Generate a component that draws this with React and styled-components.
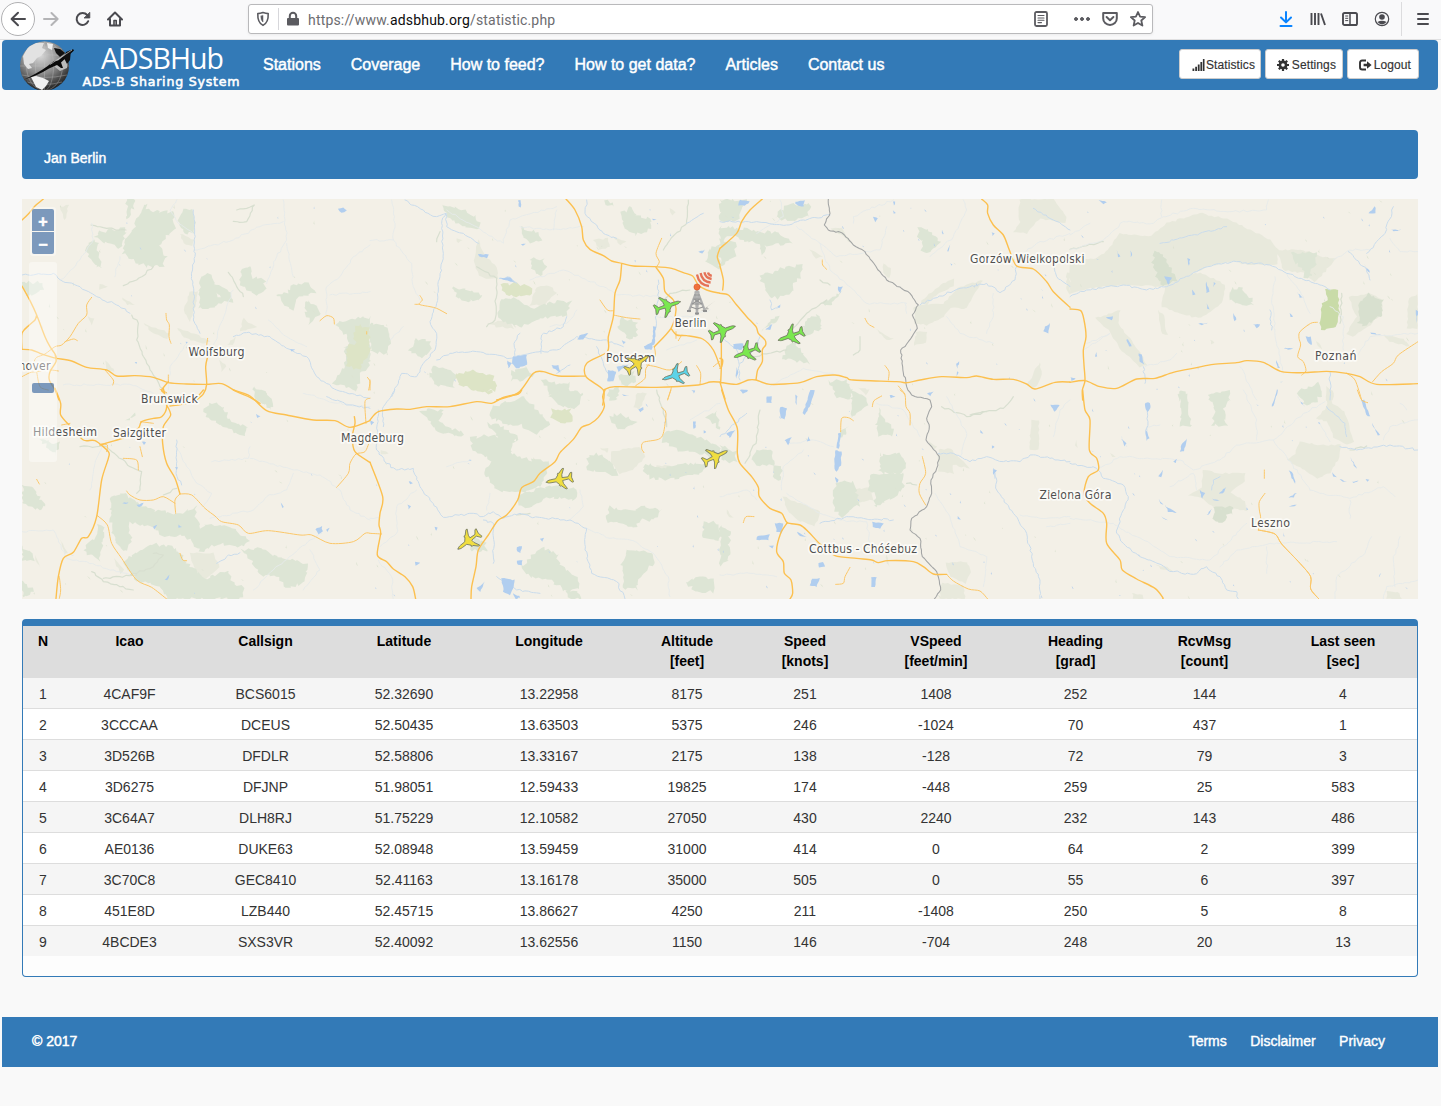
import React from "react";
import styled, { createGlobalStyle } from "styled-components";

/* ---------- shared values ---------- */
const blue = "#337ab7";
const sans = '"Liberation Sans", Arial, Helvetica, sans-serif';

const GlobalStyle = createGlobalStyle`
  *, *::before, *::after { box-sizing: border-box; }
  body { margin: 0; background: #f9f9f9; color: #333; font: 14px/20px ${sans}; }
`;

const Page = styled.div`
  width: 1441px;
  height: 1106px;
  display: flex;
  flex-direction: column;
  overflow: hidden;
`;

/* ---------- browser chrome ---------- */
const Toolbar = styled.div`
  height: 40px;
  flex: none;
  display: flex;
  align-items: center;
  border-bottom: 1px solid #e0e0e1;
  background: #f9f9fa;
  padding: 0 10px 2px 1px;
`;
const BackCircle = styled.div`
  width: 34px;
  height: 34px;
  display: grid;
  place-items: center;
  border: 1px solid #b1b1b3;
  border-radius: 50%;
  background: #fff;
`;
const ChromeIcon = styled.svg`
  display: block;
  width: 16px;
  height: 16px;
  flex: none;
  fill: none;
  stroke: ${(p) => p.$color || "#4a4a4f"};
  stroke-width: ${(p) => p.$w || 2};
  stroke-linecap: round;
  stroke-linejoin: round;
`;
const NavIcons = styled.div`
  display: flex;
  gap: 16px;
  margin-left: 8px;
`;
const UrlBar = styled.div`
  width: 905px;
  height: 30px;
  margin-left: 125px;
  display: flex;
  align-items: center;
  padding: 0 6px;
  border: 1px solid #b9b9bb;
  border-radius: 3px;
  background: #fff;
  box-shadow: 0 1px 3px rgba(0, 0, 0, 0.06);
`;
const UrlDivider = styled.span`
  width: 1px;
  height: 22px;
  margin: 0 6px 0 7px;
  background: #d7d7db;
`;
const Url = styled.span`
  margin-left: 7px;
  padding-top: 2px;
  flex: 1;
  font: 14px/20px Roboto, ${sans};
  letter-spacing: 0.18px;
  color: #6c6c70;
  b { font-weight: 400; color: #0c0c0d; }
`;
const UrlActions = styled.div`
  display: flex;
  align-items: center;
  gap: 12px;
`;
const Gap = styled.span`
  width: ${(p) => p.$w}px;
  flex: none;
`;
const RightIcons = styled.div`
  display: flex;
  gap: 16px;
  margin-left: auto;
  margin-right: 11px;
`;
const MenuCell = styled.div`
  height: 34px;
  padding-left: 13px;
  display: flex;
  align-items: center;
  border-left: 1px solid #dcdcde;
`;

/* ---------- site header ---------- */
const Header = styled.header`
  height: 50px;
  flex: none;
  margin: 0 3px 0 2px;
  display: flex;
  align-items: center;
  border-radius: 4px;
  background: ${blue};
  padding: 0 19px 0 15px;
`;
const Logo = styled.svg`
  width: 231px;
  height: 50px;
  flex: none;
`;
const Nav = styled.nav`
  display: flex;
`;
const NavLink = styled.a`
  padding: 0 15px;
  font-size: 16px;
  color: #fff;
  -webkit-text-stroke: 0.45px #fff;
`;
const ButtonGroup = styled.div`
  display: flex;
  gap: 4px;
  margin: 0 0 2px auto;
`;
const Button = styled.a`
  width: ${(p) => p.$w}px;
  height: 30px;
  display: flex;
  align-items: center;
  justify-content: flex-end;
  gap: ${(p) => p.$gap}px;
  padding-right: ${(p) => p.$pad || 6}px;
  border: 1px solid #ccc;
  border-radius: 3px;
  background: #fff;
  color: #333;
  font-size: 12px;
  letter-spacing: 0.1px;
  padding-top: 1px;
  -webkit-text-stroke: 0.15px #333;
`;
const ButtonIcon = styled.svg`
  width: 13px;
  height: 12px;
  flex: none;
`;

/* ---------- content ---------- */
const Content = styled.main`
  padding: 40px 23px 0 22px;
  display: flex;
  flex-direction: column;
  gap: 20px;
`;
const TitleBar = styled.h1`
  height: 49px;
  margin: 0;
  display: flex;
  align-items: center;
  padding: 7px 22px 0;
  border-radius: 4px;
  background: ${blue};
  color: #fff;
  font-size: 14px;
  font-weight: 400;
  -webkit-text-stroke: 0.4px #fff;
`;
const MapFrame = styled.section`
  position: relative;
  height: 400px;
  overflow: hidden;
  background: #f3f0e7;
`;
const MapSvg = styled.svg`
  display: block;
  width: 1396px;
  height: 400px;
`;
const ZoomControl = styled.div`
  position: absolute;
  left: 8px;
  top: 8px;
  display: grid;
  gap: 1px;
  padding: 2px;
  border-radius: 3px;
  background: rgba(255, 255, 255, 0.4);
`;
const ZoomButton = styled.span`
  width: 22px;
  height: 22px;
  display: grid;
  place-items: center;
  padding-top: 3px;
  border-radius: ${(p) => (p.$top ? "2px 2px 0 0" : "0 0 2px 2px")};
  background: rgba(0, 60, 136, 0.5);
  color: #fff;
  font: bold 16px/16px ${sans};
  -webkit-text-stroke: 0.5px #fff;
`;
const ZoomTrack = styled.div`
  position: absolute;
  left: 7px;
  top: 63px;
  width: 28px;
  height: 200px;
  padding: 121px 3px 0;
  border-radius: 3px;
  background: rgba(255, 255, 255, 0.4);
`;
const ZoomThumb = styled.div`
  height: 10px;
  border-radius: 2px;
  background: rgba(0, 60, 136, 0.5);
`;

/* ---------- table ---------- */
const Panel = styled.section`
  height: 358px;
  border: 1px solid ${blue};
  border-top-width: 7px;
  border-radius: 4px;
  background: #fdfdfd;
  overflow: hidden;
`;
const Table = styled.table`
  width: 1394px;
  table-layout: fixed;
  border-spacing: 0;
  text-align: center;
`;
const Th = styled.th`
  height: 52px;
  padding: 5px 0 0;
  vertical-align: top;
  background: #ddd;
  color: #000;
  white-space: pre-line;
`;
const Tr = styled.tr`
  height: ${(p) => (p.$first ? 30 : 31)}px;
  background: ${(p) => (p.$odd ? "#f5f5f5" : "#fff")};
`;
const Td = styled.td`
  padding: 6px 0 4px;
  border-top: ${(p) => (p.$first ? "0" : "1px solid #ddd")};
  color: #333;
`;

/* ---------- footer ---------- */
const Footer = styled.footer`
  height: 50px;
  flex: none;
  margin: 40px 3px 0 2px;
  display: flex;
  align-items: center;
  gap: 23.5px;
  padding: 0 53px 2px 30px;
  background: ${blue};
  color: #fff;
  -webkit-text-stroke: 0.4px #fff;
`;
const Copyright = styled.span`
  margin-right: auto;
  -webkit-text-stroke: 0.5px #fff;
`;

/* ---------- cartography ---------- */
// Each sheet covers a 350 x 215 area; its points are given in thirds of a pixel.
const sheets = [
  {
    at: [20, 190],
    roads: ["6,90 25,72 45,48 70,27", "6,288 30,332 50,375 75,440 90,470 105,492 110,505", "6,478 6,430 28,405 45,390 50,375", "6,478 35,480 60,490 90,500 110,505 155,513 200,532 260,540 290,558 345,557 400,562 445,578 500,582 560,583 605,581 650,605 690,622 720,640", "105,492 108,515 90,545 88,570 105,600 117,630", "563,500 557,530 560,583 550,612 530,630", "445,575 425,600 432,608"],
    minor: ["42,515 50,502 75,492 105,470 125,465 150,440 175,400 200,375 200,345 215,322", "135,455 160,447 172,452", "6,560 30,548 50,545 90,540 115,543", "50,545 60,590 85,600", "438,370 440,390 448,405 447,440 453,460", "563,445 560,470 565,500", "445,555 445,578", "420,598 440,608", "255,540 280,570 278,585", "900,392 920,377 940,384 943,402", "1040,425 1040,432", "1042,562 1050,575 1046,600"],
    forest: ["375,40 385,60 430,65 455,65 465,110 440,140 420,170 440,200 430,225 380,230 345,215 308,188 320,150 350,90", "240,125 320,115 300,172 260,160 225,140", "210,150 235,160 235,190 245,235 215,215 195,180", "320,27 350,27 335,60 320,90", "490,60 515,60 525,100 520,130 495,130 475,90", "545,255 570,248 600,325 580,280 635,305 635,335 600,338 560,360 535,350 540,290", "665,235 690,230 700,262 735,270 735,300 710,318 690,300 660,285", "770,310 805,310 820,282 870,280 885,305 830,325 820,358 790,345", "855,330 890,345 900,375 870,402 858,370", "945,398 1010,385 1050,382 1050,520 1020,560 1010,600 940,580 960,545 975,530 975,470 990,455", "700,595 750,620 755,650 710,630", "6,280 60,275 70,300 25,320"],
    olive: ["1000,405 1045,410 1050,480 1020,540 980,525 980,470 1005,465"],
    heath: ["510,305 535,305 525,350 510,395 490,360 500,340", "670,385 710,412 660,425", "480,130 520,150 515,170 490,160", "305,320 345,345 320,345", "120,50 145,45 135,90", "470,415 520,430 570,455 545,462 490,440", "370,400 450,430 440,445 400,430", "240,280 265,290 235,300", "205,380 222,385 215,405", "600,510 620,530 605,545", "255,510 285,545 260,540", "620,465 645,440 640,465"],
    faint: ["470,30 450,60 475,100 520,130", "215,100 220,150 160,235 120,270", "790,30 800,150 770,200 740,280", "920,380 920,290 960,260 1000,200 1050,165", "130,585 330,583 400,610", "500,460 450,530 445,600", "930,315 1050,305", "285,260 300,200", "580,470 620,350 640,300", "525,180 640,150 720,110 790,95", "800,160 820,260", "745,390 800,440 860,470"],
    river: ["520,60 525,200 515,260 522,330 520,390 540,430", "6,255 100,250 130,275 180,290 230,320 290,345 330,370", "640,440 680,428 750,440 800,475 860,500 890,560 950,600 1050,625"],
    green: ["335,375 355,400 350,450 380,520 420,590 440,610", "310,287 350,270 400,230", "625,247 650,290 670,320", "640,94 680,95 703,45 680,55 650,60", "213,105 260,115 318,120"],
    water: ["955,58 970,53 980,62 965,70", "810,478 825,480 815,484", "497,455 503,455 500,462", "345,515 352,516 350,522"],
  },
  {
    at: [20, 390],
    roads: ["105,-5 122,40 122,75 150,108 190,150 225,152 265,185 265,205 245,270 230,380 205,440 185,445 160,487 130,505 115,560 108,625", "240,165 285,152 320,140 355,115 365,95 400,85 425,80 440,50 430,-5", "440,45 452,75 430,110 428,160 440,220 465,265 480,312", "640,0 690,18 740,62 800,75 880,90 945,92 990,112 1050,92", "550,0 530,22 500,40 450,48", "1003,80 1005,100 997,140 1005,185 1050,217"],
    minor: ["480,312 465,330 467,370", "480,312 515,315 555,355 585,378 605,395 655,405 685,430 745,422 840,435 875,435 930,460 1000,455 1035,430 1050,430", "465,340 430,320 400,330 360,330 330,315 320,303", "232,377 262,405 275,460 305,505 350,570 395,592 440,627", "118,560 122,600 118,625", "360,170 367,200", "310,205 350,210 355,240", "480,490 488,510 500,512", "50,268 58,282", "362,95 400,100", "1050,25 1035,35 1038,100", "1050,150 1035,185 1008,192 990,220 985,250 950,292", "125,105 150,100", "245,162 262,165 260,185"],
    forest: ["550,55 580,38 610,50 630,90 680,110 670,140 620,115 570,90", "275,320 310,305 340,330 400,360 470,372 530,350 525,375 545,415 570,400 640,412 685,455 670,470 600,460 540,485 500,440 430,435 380,405 325,400 335,450 315,485 285,455 270,380", "395,460 470,475 500,520 560,570 620,540 640,575 670,590 670,627 445,627 420,590 350,570 310,510", "665,480 720,475 770,500 860,520 855,580 800,590 770,560 720,555 690,510", "230,400 250,410 245,470 240,510 190,485 200,460 225,450", "6,285 40,295 75,345 60,362 6,345", "6,470 35,490 40,515 6,510", "6,570 40,600 6,625", "700,-10 740,5 755,55 720,40", "60,150 115,160 110,195 80,170", "320,90 350,70 345,80"],
    olive: [],
    heath: ["510,490 580,490 600,530 550,575 520,530", "120,450 145,490 135,490", "45,495 62,535 50,520", "280,505 312,540 300,552"],
    faint: ["575,215 685,205 690,170", "690,205 820,240 900,255 960,300 990,360 1050,390", "245,170 225,220 210,300", "6,425 100,420 140,505 200,515 290,545 330,555", "570,385 700,360 740,320 800,300 820,250", "700,600 760,540 870,450 905,430", "850,10 950,40 1050,50", "870,480 900,540 850,600", "470,170 530,280 575,310 550,350"],
    river: ["470,150 468,250 485,285", "590,520 620,500 660,488", "920,20 990,45 1050,55"],
    green: ["180,170 260,170 330,230 365,245 360,300 350,310", "215,545 250,575 340,600", "330,555 400,530 430,495 400,490", "430,315 470,295", "250,565 300,560 350,555"],
    water: ["885,418 905,408 908,422 895,432", "918,418 930,415 922,425", "708,70 720,80 712,85", "365,155 378,157 372,165", "435,570 450,555 442,572", "783,338 792,350 788,354", "465,232 473,232 470,240", "350,345 370,338 360,352", "400,410 412,405 404,418", "474,405 486,410 476,412", "308,340 325,335 318,343"],
  },
  {
    at: [370, 190],
    roads: ["588,27 615,60 635,110 640,150 660,178 700,197 725,213 755,220 790,228 855,230 905,235 940,248 968,258 985,285 1010,300 1050,310", "755,220 750,270 735,310 730,380 715,440 712,485 650,520 648,560 700,600 698,645", "380,630 445,608 490,550 520,545 565,558 648,558", "700,600 735,590 860,592 985,585 1020,576 1050,576", "858,232 880,265 885,305 910,330 918,360 903,415 853,470", "903,415 920,435 950,437 998,447 1030,480 1050,530", "1050,175 1042,200 1050,225"],
    minor: ["690,330 712,360 730,362", "730,375 770,383 810,387", "875,145 858,190 868,215 858,232", "853,470 855,500 828,535 825,565 797,587", "925,452 935,435", "918,425 918,445", "830,525 858,530 900,540 935,515", "980,527 992,550 990,583", "905,590 893,630", "150,317 157,330 148,343 180,350 200,355 230,371", "135,343 148,343", "0,570 0,600", "1030,530 1048,515"],
    forest: ["215,45 260,50 310,75 330,95 320,120 275,105 235,80", "450,110 505,130 515,155 480,160 455,140", "785,50 800,80 840,85 845,115 800,135 760,110 755,70", "483,205 520,205 530,235 510,262 485,235", "245,292 290,303 325,305 335,325 290,332 262,325", "395,330 440,325 490,360 540,335 605,335 590,380 520,385 450,410 395,395 385,365", "0,395 45,410 62,450 50,490 0,485", "140,445 180,450 180,490 150,505 115,480", "190,530 230,535 260,560 250,590 200,590 180,560", "425,545 470,530 490,555 450,575 425,570", "510,565 560,580 600,580 600,625 540,610", "750,385 800,395 800,440 770,445 745,415", "1015,180 1050,160 1050,240 1005,215", "715,600 750,590 740,630 715,630", "750,560 790,545 795,580 755,590", "705,30 730,45 715,50"],
    olive: ["395,285 430,280 485,290 480,315 430,322 400,310", "255,550 310,540 370,560 380,600 330,605 270,585"],
    heath: ["325,150 345,200 380,230 385,265 350,265 325,255 310,210", "500,290 540,288 560,310 520,345 480,345", "670,150 715,145 720,170 690,180", "730,140 770,155 750,165", "260,145 280,150 265,160", "900,55 915,65 905,75", "350,400 420,390 430,415 380,410"],
    faint: ["65,30 75,100 70,150 0,152", "70,150 125,220 130,290 150,330", "230,60 400,160 420,90 560,50", "450,110 540,120 640,110", "480,270 580,240 700,290 740,315 860,318", "100,410 60,450", "560,60 550,120", "540,410 590,400 620,360", "890,480 980,450", "860,380 960,380 1020,360"],
    river: ["105,30 125,45 160,60 200,80 228,70 215,100 220,190 210,260 200,340 180,395 200,430 195,480 160,520 140,560 95,550 85,580 65,620", "228,70 230,110 280,130 325,160", "200,510 240,490 320,485 420,505 480,490 560,480 620,440 700,450 760,470", "590,380 580,410 515,435 513,490", "450,430 432,460 435,500", "650,30 645,70 680,105 700,130 740,145", "865,270 865,330 855,420", "388,265 420,262 440,280", "600,525 560,550", "680,470 700,520 720,560", "1000,70 950,100"],
    green: ["320,230 380,265 375,390 350,410", "955,30 950,100 900,150 880,180", "200,155 210,125", "960,300 900,310 870,345"],
    water: ["430,500 470,495 470,525 440,535 425,520", "715,540 740,545 730,575 712,575", "325,193 355,193 350,203 328,200", "820,470 850,455 845,480 825,478", "845,85 865,90 850,92", "755,450 767,455 760,463", "545,525 565,525 572,548 550,535", "985,185 1005,178 998,190", "445,30 452,30 453,52 447,50", "630,435 655,430 640,448 620,448", "850,410 858,410 854,465 846,465", "412,512 425,520 415,535", "792,210 797,212 795,218", "740,530 775,525 745,545", "388,265 420,262 435,278 400,268", "453,162 466,162 458,166"],
  },
  {
    at: [370, 390],
    roads: ["0,90 25,65 80,57 120,58 170,50 240,50 320,35 365,40 400,22 445,12 455,0", "705,0 698,20 703,50 685,82 660,102 635,112 610,148 570,188 555,215 510,250 490,275 455,293 443,330 410,375 383,392 355,435 325,480 318,530 305,590 303,627", "0,217 38,320 30,370 27,405 32,430 22,495 50,515 70,537 105,560 128,590 137,627"],
    minor: ["0,430 35,432", "903,0 893,28", "875,53 888,70 880,130 865,148 820,157 815,175 822,188"],
    forest: ["150,60 220,60 205,95 280,130 275,140 200,125 180,95", "370,50 460,20 500,60 540,100 500,135 450,105 400,100 360,80", "535,15 580,0 640,10 620,60 570,50", "300,145 370,135 440,150 420,190 480,210 540,215 510,290 430,310 380,300 360,270 345,245 370,215 310,180", "350,100 400,110 450,150 390,150", "450,310 530,290 625,295 610,330 540,320 470,355 445,345", "655,200 680,190 720,210 740,255 690,245 650,240", "825,220 870,235 950,220 1005,225 990,255 900,268 840,265 822,245", "885,120 960,130 1050,170 1050,215 1000,190 930,185 880,155", "715,350 770,362 830,350 875,360 850,390 810,390 800,410 710,395", "520,475 560,490 570,525 620,560 625,600 580,600 550,575 480,560 455,535 490,490", "590,597 620,603 635,627 600,627", "770,480 845,490 850,520 810,560 800,600 760,595 755,520", "950,580 985,555 1035,570 1030,605 975,605", "1000,395 1050,400 1050,455 1000,440", "720,80 750,70 800,100 760,120 735,110", "310,435 345,460 350,485 300,480", "1010,80 1040,65 1050,120"],
    olive: ["545,60 600,55 605,90 580,105 545,85", "330,0 370,0 360,8"],
    heath: ["725,185 810,170 825,200 790,240 750,250 725,220", "860,225 920,230 900,255 860,248", "690,175 715,175 710,188", "30,180 55,190 35,195", "800,10 830,10 810,60 790,50"],
    faint: ["140,300 80,350 80,430 30,470", "650,415 720,445 780,450 850,490 895,560 900,620", "25,510 65,560 70,627", "630,300 640,350 600,390", "0,385 30,385", "230,230 300,210", "360,310 350,360", "960,90 1050,40"],
    river: ["25,60 20,180 50,220 80,240 130,235 150,290 220,382 310,370 330,380 370,365 400,385 450,370 480,380 600,390 650,415 645,480 665,550 740,575 765,627", "75,0 40,50 40,110", "370,520 370,400 340,390", "380,560 440,600 510,610"],
    green: ["890,110 880,60 860,0", "480,370 440,375"],
    water: ["395,565 435,570 430,590 420,615 400,605", "440,470 457,470 450,490 442,485", "442,512 457,510 455,525 443,525", "508,445 523,443 518,455", "805,58 820,50 820,60 810,68", "970,95 977,95 977,115 970,118", "320,595 345,575 330,605", "193,412 203,412 198,422", "135,515 150,520 138,526", "115,273 128,278 120,283", "113,345 122,348 116,358", "0,92 12,95 4,105", "1000,120 1010,128 1000,130", "295,210 306,211 300,214", "755,14 778,16 762,18", "430,610 452,622 435,627", "965,0 975,0 972,12"],
  },
  {
    at: [720, 190],
    roads: ["0,175 50,130 65,95 90,60 127,27", "0,228 10,270 8,300", "0,310 25,315 50,345 80,380 108,410 115,430 135,450 137,465 127,480 127,515 113,540 108,570", "0,577 50,583 85,570 108,570 150,583 240,578 290,560 345,555 380,563 400,570 530,575 560,578 600,570 665,560 740,563 770,558 820,568 880,568 920,582 945,597 1005,577 1050,576", "785,27 803,45 803,70 820,105 850,135 868,180 890,228 940,237 980,275 1000,305 1050,352", "0,505 8,510 5,530 0,535", "0,577 15,627", "4,450 4,530 2,577"],
    minor: ["495,527 507,545 505,570", "535,588 555,612", "307,210 308,225 320,238", "435,385 445,402 462,412"],
    forest: ["0,110 60,115 130,125 185,130 215,160 135,165 130,190 115,160 80,155 40,135 0,150", "0,30 80,30 50,90 0,95", "200,45 270,40 265,75 215,90 160,85", "0,150 45,160 50,190 10,225 0,230", "595,115 625,115 660,155 630,188 605,180 610,150 592,140", "115,262 170,240 245,225 245,260 220,275 220,305 175,325 150,320", "270,380 300,375 300,420 250,440 250,410", "200,470 225,460 270,522 185,505", "325,575 380,570 395,600 390,630 350,620", "300,340 365,305 330,350", "125,420 155,390 175,380 150,410"],
    olive: [],
    heath: ["900,27 1000,27 1040,80 1035,100 960,85 920,130 880,125 900,95 895,60", "490,220 515,235 510,265 490,250", "600,340 640,300 670,280 700,268 700,290 640,320 620,345", "670,340 720,290 790,270 770,300 740,355 690,355 670,380 620,405 585,400 580,350 600,345", "590,425 620,425 620,460 580,465", "920,585 960,515 965,560 945,595", "1040,250 1050,250 1050,315 1040,300", "465,415 520,447 500,450", "410,590 450,600 440,615", "270,180 310,200 290,205", "330,115 365,115 400,165 370,140"],
    faint: ["230,110 300,160 330,240 400,300 440,340 560,340", "400,100 400,80 440,60 520,30", "880,215 950,160 1050,130", "630,200 700,140 740,60 730,30", "300,160 350,200 480,180 500,110", "820,310 820,380 800,430", "680,380 720,430 820,460", "180,30 190,80 110,130", "150,590 250,535 340,550", "555,340 560,370"],
    river: ["0,95 110,95 200,105 250,90 330,75", "600,345 640,325 720,295 800,280 840,308 885,270 890,230", "0,440 50,480 60,570", "150,330 155,360 180,350", "60,520 110,470 120,440", "940,55 1000,90 1050,120", "1003,230 1010,260 1050,290"],
    green: ["320,330 260,370 200,440", "420,440 420,480 400,495", "100,500 200,480", "300,270 330,285"],
    water: ["225,35 255,30 250,50 230,45", "460,80 475,85 465,95", "518,35 525,35 522,48", "520,60 526,68 520,72", "40,462 70,460 65,480 40,475", "815,126 825,130 818,138", "975,410 990,400 985,430 970,425", "355,290 368,290 362,310 355,305", "135,420 157,403 150,420", "270,600 277,602 274,630", "60,30 90,35 75,48 55,45", "680,182 692,165 686,184", "172,350 182,342 178,354", "665,120 672,130 668,134", "963,295 975,305 968,302", "708,520 718,515 712,535", "710,545 715,548 710,566", "50,530 55,545 48,565", "690,220 696,222 694,227", "60,600 85,600 70,612", "510,615 525,620 512,624"],
  },
  {
    at: [720, 390],
    roads: ["5,0 25,60 52,115 52,190 60,220 95,260 115,292 118,320 150,355 185,370 202,398 240,405 265,425 300,462 345,497 410,505 455,510 475,518 505,512 580,515 610,530 640,552 680,553", "202,398 182,430 170,485 190,515 193,550 213,570 218,610 210,627"],
    minor: ["680,553 700,573 745,597 780,603 803,627", "70,398 78,380 102,380", "347,583 370,580 375,560 390,532", "362,125 365,85 385,83 400,92", "457,50 462,32 485,18", "540,0 555,15 558,50 570,70 570,105", "607,200 617,250 600,280 598,310 617,345"],
    forest: ["395,0 440,20 440,50 395,85 395,40", "345,0 400,0 390,30 360,20", "475,55 490,85 520,120 520,135 480,135 468,110", "490,190 545,190 560,230 550,250 480,250 480,220", "450,250 550,250 550,300 465,355 465,310 448,300", "345,280 400,275 415,320 415,345 365,380 340,355", "0,165 45,185 55,220 0,210", "105,180 150,175 165,225 120,225 95,210", "0,405 30,420 25,515 0,525", "165,225 185,230 180,270 160,265", "360,130 385,110 365,145"],
    olive: [],
    heath: ["400,300 450,290 460,330 400,340", "190,320 240,340 300,365 285,410 230,390 200,360", "655,180 690,175 730,215 750,235 700,225 700,250 655,245", "675,520 740,515 755,545 735,580 690,560", "665,580 730,585 735,627 660,627", "935,90 957,92 955,180 930,180 930,130", "620,150 650,170 640,180", "20,360 40,385 25,380", "500,490 510,530 498,520"],
    faint: ["200,310 300,370 380,395 440,395 450,460", "210,160 280,150 340,170", "470,40 550,60 600,140", "645,310 690,380 720,470 800,500 790,590", "0,555 90,550 170,560", "720,200 740,130 680,20", "0,320 80,300 110,330", "900,375 960,385 1050,380", "980,410 1050,400", "185,300 190,230 250,180", "1000,140 1020,60 1050,30"],
    river: ["655,190 700,190 750,215 800,200 850,215 900,215 930,195 990,205 1050,215", "825,250 830,300 880,370 920,430 940,520 960,570 960,627", "0,140 80,70", "300,400 380,380 430,385 520,390", "820,240 825,265"],
    green: ["120,60 110,150 75,220", "665,50 740,80 850,55 880,20", "560,280 590,285", "750,75 800,65"],
    water: ["345,180 365,185 362,225 350,245 343,235", "270,0 285,0 275,35 255,75 248,70 262,30", "355,130 362,130 358,175 350,175", "180,50 200,55 195,90 180,80", "140,20 155,20 155,40 140,38", "110,440 150,432 145,450 110,450", "145,467 160,467 158,476", "295,520 310,515 315,530 298,533", "275,565 298,565 290,590 270,585", "455,560 470,562 465,590 455,590", "455,395 490,400 480,415 460,412", "165,400 190,400 185,430 170,425", "820,235 830,240 820,255", "990,45 1020,45 1005,65", "225,15 232,20 228,45", "20,130 45,120 30,145", "510,15 528,20 512,22", "195,150 215,140 205,165", "345,260 357,270 350,280", "230,425 260,440 240,438", "712,378 722,388 714,388", "780,120 790,130 782,130", "815,165 825,172 816,176", "620,10 640,5 630,20", "265,140 270,150 262,155"],
  },
  {
    at: [1070, 190],
    roads: ["0,577 45,572 90,590 140,595 200,567 255,565 310,547 380,533 430,523 500,518 530,512 580,517 635,545 700,548 770,544 830,550 870,560 920,583 1044,581", "0,357 32,362 42,390 48,440 40,480 42,525 45,572 37,600 38,630"],
    minor: ["695,555 708,542 700,515 683,500 692,465 687,445 690,425 722,400 742,397", "908,575 935,545 970,520 985,495 1044,455", "830,550 855,570 875,630"],
    forest: ["255,185 275,190 300,230 320,270 280,290 265,270 248,220", "665,190 740,190 740,225 720,240 730,260 700,265 700,235 670,215", "485,295 515,295 545,325 548,348 500,340 475,325", "325,600 345,610 345,630 330,630", "415,615 475,605 480,630 420,630", "680,605 745,580 755,620 700,625"],
    olive: [],
    heath: ["0,210 80,205 115,180 150,130 235,140 290,100 390,68 480,90 540,120 600,150 625,180 620,225 540,225 480,215 420,230 375,245 350,265 290,290 160,285 60,295 0,310", "285,290 350,250 400,250 440,270 465,285 460,330 430,360 385,385 330,370 275,350", "620,180 700,180 760,200 800,205 760,250 735,275 700,250 640,240", "75,385 150,360 145,400 175,440 205,480 230,525 210,530 150,475 115,420", "262,360 280,370 292,435 275,430", "835,320 900,310 940,330 935,370 900,405 850,440 830,430 860,380", "1015,325 1044,315 1044,415 1012,415", "940,435 1000,445 1020,470 960,455", "770,590 790,600 790,630 768,630", "735,445 755,475 745,465", "420,448 435,460 425,462"],
    over: ["865,350 890,310 940,330 935,375 880,410 865,400", "255,185 275,190 300,230 320,270 280,290 265,270 248,220"],
    park: ["763,298 805,300 808,375 798,412 755,420 748,400 757,340 775,330"],
    faint: ["0,180 100,150 160,95 250,100 280,80 370,55 480,65 590,60 595,30", "615,260 605,330 620,460 640,550", "650,250 700,320 720,370", "780,350 820,380 820,480", "1044,185 990,185 960,145", "860,500 900,440 1044,430", "275,30 275,80", "40,480 120,430 50,460", "225,530 300,510 320,490", "510,530 540,590 560,630", "0,135 60,100", "790,210 840,180 900,180"],
    river: ["0,320 50,300 160,285 230,300 290,290 380,245 430,225 500,215 600,225 650,250 750,285 780,300", "835,185 890,240 900,270", "970,50 945,130 890,190", "780,545 780,630", "220,530 225,580", "270,160 390,130 470,110", "600,360 605,420"],
    green: ["0,178 100,155", "815,310 810,400"],
    water: ["900,65 915,48 917,70 895,70", "168,450 175,447 185,470 177,470", "205,490 215,495 222,525 210,515", "108,382 130,378 125,392", "408,275 418,305 410,310", "410,340 420,358 412,355", "548,402 570,404 560,415", "708,440 722,440 725,465 715,460", "618,508 630,535 622,535", "283,260 305,262 295,285", "430,275 436,280 430,292", "660,370 670,380 662,380", "883,220 900,248 892,246", "490,370 500,390 492,392", "140,180 150,200 145,202", "180,180 188,195 182,200", "385,400 415,400 395,405", "85,30 110,35 100,42", "680,305 698,322 690,322", "0,560 18,565 5,572", "640,474 672,475 655,478", "962,118 995,120 970,123", "80,485 80,500 74,500", "900,428 935,435 905,432", "365,300 378,312 368,315", "352,205 360,208 357,228", "630,575 640,576 634,578", "1038,360 1044,365 1040,400"],
  },
  {
    at: [1070, 390],
    roads: ["38,0 45,60 60,90 58,180 80,205 85,240 55,260 42,310 60,340 100,370 110,400 110,460 150,510 157,540 200,567 255,595 278,622 278,627"],
    minor: ["583,240 583,265", "585,310 568,335 568,360 572,385 565,420", "565,420 615,432 635,462 690,520 722,560 722,597 747,627", "565,420 615,432 635,462 690,520 722,560 722,597 747,627", "862,0 875,30 893,38"],
    forest: ["330,10 350,15 365,110 330,105", "415,25 475,10 480,30 460,60 470,110 425,105 435,60", "690,20 745,0 745,35 710,50"],
    olive: [],
    heath: ["400,240 450,250 525,250 525,275 480,305 525,335 530,362 430,350 390,320 355,315 395,290", "770,0 790,40 825,65 850,155 830,165 790,140 770,95 738,85 770,50", "690,155 750,165 810,165 810,195 780,250 740,265 652,210 675,190", "185,608 220,615 220,627 190,627", "950,605 985,605 995,627 950,627", "250,522 290,530 310,545 280,540", "20,150 25,175 15,165", "120,190 135,200 125,200"],
    over: ["430,350 485,350 485,370 450,398 430,390"],
    faint: ["80,240 150,200 330,210 370,240 450,210 500,165 610,150 700,70 765,35", "450,530 500,480 600,460 800,455", "560,150 560,90 520,0", "0,385 130,400 160,420 240,460 300,500 420,510 530,400", "720,300 750,310 840,325 940,290 975,320", "840,330 840,385", "905,440 885,490 800,560 795,627", "1044,570 950,590 940,627", "590,470 590,550", "750,100 780,155", "610,150 650,200 720,300", "940,150 960,110 1044,90", "990,40 1010,60", "230,150 230,110 270,105", "170,170 155,140", "300,290 370,250 380,300", "975,590 970,510 990,440"],
    river: ["0,220 80,235 100,265 160,285 175,320 155,370 140,430 160,460 210,500 240,510 310,545 370,553 410,530 450,560 470,600 500,605 505,627", "830,140 825,100 770,50", "810,170 860,180 960,165 1044,180", "425,300 430,270 450,260", "232,60 230,150"],
    green: ["840,180 890,168"],
    water: ["225,38 240,38 240,55 232,65 225,50", "335,165 352,145 342,182 330,185", "283,345 320,368 295,365", "620,0 625,0 610,48 605,50", "872,30 882,30 900,80 893,80", "905,100 930,135 922,135", "657,240 666,245 677,280 668,270", "785,245 800,260 790,258", "810,268 830,275 818,275", "840,200 862,235 855,232", "845,277 867,272 850,280", "445,312 470,290 458,310", "388,300 405,310 395,325", "425,325 450,332 432,330", "270,375 295,392 280,385", "265,260 280,240 275,262", "655,322 680,308 670,322", "655,348 680,345 665,350", "155,145 170,160 165,170", "925,560 935,548 930,560", "265,328 280,345 270,338", "640,428 645,438 642,438", "310,215 322,205 316,218", "528,342 534,360 530,358", "410,375 425,355 416,375", "888,268 898,270 892,274", "226,115 238,145 230,150", "680,18 705,50 695,42", "743,97 752,98 748,103"],
  },
];

const border = "325,27 330,70 313,105 325,120 365,128 400,165 435,185 480,245 500,270 570,310 595,345 577,375 592,415 560,462 542,480 548,530 560,590 575,615 630,630 635,650 620,685 628,710 618,750 640,778 658,800 650,835 633,870 635,910 620,950 575,985 570,1020 600,1045 607,1100 650,1145 662,1200 643,1227";

// Small deterministic generator, so coastlines are the same on every load.
function rng(seed) {
  let s = seed >>> 0;
  return () => {
    s = (Math.imul(s, 1664525) + 1013904223) >>> 0;
    return s / 4294967296;
  };
}
const parse = (str) => str.split(" ").map((p) => p.split(",").map(Number));

// Breaks each edge into short steps and nudges them to get a natural outline.
function rough(str, step, amp, closed) {
  const pts = parse(str);
  const rand = rng(Math.round(pts[0][0] * 131 + pts[0][1] * 17 + pts.length * 7 + 3));
  const out = [];
  const n = closed ? pts.length : pts.length - 1;
  for (let i = 0; i < n; i++) {
    const a = pts[i];
    const b = pts[(i + 1) % pts.length];
    const count = Math.max(1, Math.round(Math.hypot(b[0] - a[0], b[1] - a[1]) / step));
    for (let k = 0; k < count; k++) {
      const t = k / count;
      const j = k === 0 && !closed ? 0 : amp;
      out.push([
        a[0] + (b[0] - a[0]) * t + (rand() - 0.5) * 2 * j,
        a[1] + (b[1] - a[1]) * t + (rand() - 0.5) * 2 * j,
      ]);
    }
  }
  if (!closed) out.push(pts[pts.length - 1]);
  return "M" + out.map((p) => p.map((v) => v.toFixed(1)).join(",")).join("L") + (closed ? "Z" : "");
}
// Rounded line through the listed points.
function smooth(str) {
  const p = parse(str);
  let d = `M${p[0]}`;
  for (let i = 0; i < p.length - 1; i++) {
    const a = p[i - 1] || p[i];
    const b = p[i];
    const c = p[i + 1];
    const e = p[i + 2] || c;
    d += `C${b[0] + (c[0] - a[0]) / 7},${b[1] + (c[1] - a[1]) / 7} ${c[0] - (e[0] - b[0]) / 7},${c[1] - (e[1] - b[1]) / 7} ${c[0]},${c[1]}`;
  }
  return d;
}
const areas = (list, step = 8, amp = 5.5) => (list || []).map((s) => rough(s, step, amp, true)).join("");
const lines = (list, step = 10, amp = 3) => (list || []).map((s) => rough(s, step, amp, false)).join("");
const curves = (list) => (list || []).map(smooth).join("");

function specks(seed, count, x0, x1, size) {
  const r = rng(seed);
  let d = "";
  for (let i = 0; i < count; i++) {
    const x = x0 + r() * (x1 - x0);
    const y = 200 + r() * 396;
    const w = (r() - 0.3) * size;
    const h = (0.4 + r()) * size;
    d += `M${x.toFixed(1)},${y.toFixed(1)}l${w.toFixed(1)},${(h * 0.4).toFixed(1)}l${(w * 0.3 + 0.6).toFixed(1)},${(h * 0.6).toFixed(1)}l-1.4,${(-h * 0.3).toFixed(1)}z`;
  }
  return d;
}

const cities = [
  ["Wolfsburg", 188.5, 356, 56], ["Brunswick", 141, 402.5, 57], ["Salzgitter", 113, 436.5, 53],
  ["Hildesheim", 33, 436, 64], ["nover", 18.5, 370, 32], ["Magdeburg", 341, 442, 63],
  ["Berlin", 674.5, 327.3, 32], ["Potsdam", 606, 362, 49], ["Gorzów Wielkopolski", 970, 263, 114.5],
  ["Poznań", 1315, 360, 41.5], ["Zielona Góra", 1039.5, 499, 72], ["Leszno", 1251, 527, 39],
  ["Cottbus - Chóśebuz", 809, 552.7, 108],
];

const planes = [
  [667, 306, 72, "#7be84f"], [722, 331, 70, "#7be84f"], [747, 352, 248, "#7be84f"],
  [791.5, 335.5, 250, "#7be84f"], [637, 364, 55, "#f0d840"], [676, 375, 252, "#5cd3e8"],
  [715, 457, 64, "#f0de40"], [560, 479.5, 259, "#f0de40"], [469, 540.5, 232, "#f0de40"],
];

const PLANE =
  "M0,-13.8C1,-13 1.5,-11.5 1.5,-9.5L1.6,-4.2L5,-1.2L5.6,-1.8L6.6,-1L6.3,0L10.4,4.2L10.2,5.6L4.5,2.7L1.5,2.4L1.1,8.4L4.9,11.4L4.8,12.9L0,11.8L-4.8,12.9L-4.9,11.4L-1.1,8.4L-1.5,2.4L-4.5,2.7L-10.2,5.6L-10.4,4.2L-6.3,0L-6.6,-1L-5.6,-1.8L-5,-1.2L-1.6,-4.2L-1.5,-9.5C-1.5,-11.5 -1,-13 0,-13.8Z";

function Antenna() {
  return (
    <g transform="translate(697,287)">
      <path d="M4,24L18,14L10,20L12,22Z" fill="#777" opacity=".45" />
      <path d="M0,3L-8,24M0,3L8,24M-1.5,5L0,27M1.5,5L0,27" stroke="#b0b0b0" strokeWidth="2.2" fill="none" />
      <path d="M-2.5,8H2.5M-3.5,12H3.5M-5,17L5,17M-6,20L0,22L6,20M-3,12L5,17M3,12L-5,17" stroke="#969696" strokeWidth="1.1" fill="none" />
      <path d="M-10,23h4v2h-4zM6,23h4v2h-4zM-2,25.5h4v2h-4z" fill="#8f8f8f" />
      <circle r="3.1" fill="#f0703c" stroke="#d8552a" strokeWidth=".6" />
      <path d="M0,-12.5Q2,-2 12,-1M3.6,-14Q5,-5.5 13.6,-4.5M7.4,-14.7Q8.4,-9 14.6,-8M11,-14.5Q11.5,-11.8 14.8,-11.2" fill="none" stroke="#e57358" strokeWidth="2.3" strokeLinecap="butt" />
    </g>
  );
}

function MapView() {
  const at = (s) => `translate(${s.at[0]},${s.at[1]}) scale(.33333)`;
  const layer = (key, props, make) =>
    sheets.map((s, i) => <path key={key + i} transform={at(s)} d={make(s[key])} {...props} />);
  return (
    <MapSvg viewBox="22 199 1396 400" strokeLinejoin="round" strokeLinecap="round">
      <rect x="22" y="199" width="1396" height="400" fill="#f3f0e7" />
      {layer("heath", { fill: "#e8e9dc" }, (l) => areas(l, 9, 2.5))}
      {layer("forest", { fill: "#dde5d5" }, (l) => areas(l))}
      {layer("over", { fill: "#d8e0cf" }, (l) => areas(l))}
      {layer("olive", { fill: "#dde4c6" }, (l) => areas(l))}
      {layer("park", { fill: "#c9dba8" }, (l) => areas(l, 9, 2.5))}
      <path d={specks(7, 190, 24, 1414, 3.4)} fill="#dde3d2" />
      <path d={specks(91, 110, 640, 1414, 2.6)} fill="#b8d0ec" />
      <path d={specks(45, 30, 24, 640, 2.2)} fill="#c2d6ec" />
      {layer("green", { fill: "none", stroke: "#d8dfd0", strokeWidth: 3.6 }, (l) => lines(l))}
      {layer("faint", { fill: "none", stroke: "#e5eaea", strokeWidth: 2.6 }, (l) => lines(l))}
      {layer("river", { fill: "none", stroke: "#cadcec", strokeWidth: 3 }, (l) => lines(l, 9, 3.2))}
      {layer("water", { fill: "#b1ceef" }, (l) => areas(l, 7, 1.6))}
      <path transform="translate(720,190) scale(.33333)" d={rough(border, 9, 2, false)} fill="none" stroke="#a3a5a5" strokeWidth="3.2" />
      {layer("minor", { fill: "none", stroke: "#fbc768", strokeWidth: 3 }, (l) => curves(l))}
      {layer("roads", { fill: "none", stroke: "#fcc04f", strokeWidth: 4.2 }, (l) => curves(l))}
      {cities.map(([name, x, y, w]) => (
        <text
          key={name} x={x} y={y} textLength={w} fontFamily='"DejaVu Sans Condensed", "DejaVu Sans", sans-serif'
          fontStretch="condensed" fontSize="12.3" fill="#505050" stroke="#fbfaf6" strokeWidth="3.5" paintOrder="stroke"
        >
          {name}
        </text>
      ))}
      <Antenna />
      {planes.map(([x, y, heading, fill]) => (
        <path
          key={x} d={PLANE} transform={`translate(${x},${y}) rotate(${heading})`}
          fill={fill} stroke="#6f7560" strokeWidth=".9" strokeOpacity=".85"
        />
      ))}
    </MapSvg>
  );
}

/* ---------- logo ---------- */
function LogoArt() {
  return (
    <Logo viewBox="17 40 231 50">
      <defs>
        <radialGradient id="globe" cx=".42" cy=".28" r=".75">
          <stop offset="0" stopColor="#d9d9d9" />
          <stop offset=".5" stopColor="#8e8e8e" />
          <stop offset="1" stopColor="#1c1c1c" />
        </radialGradient>
        <clipPath id="disc"><circle cx="44.5" cy="66" r="24.5" /></clipPath>
      </defs>
      <circle cx="44.5" cy="66" r="24.5" fill="url(#globe)" />
      <g clipPath="url(#disc)">
        <g fill="none" stroke="#c4c4c4" strokeWidth=".6" opacity=".6">
          <ellipse cx="44.5" cy="66" rx="9" ry="24.5" />
          <ellipse cx="44.5" cy="66" rx="18" ry="24.5" />
          <path d="M44.5,41V91M20,66H69M22,57Q44,52 67,57M22,75Q44,80 67,75M27,82Q44,87 62,82M27,49Q44,45 62,49" />
        </g>
        <path d="M23,56L28,47L36,43L44,43L42,48L46,50L41,56L37,58L33,63L29,64L32,68L28,69L24,64Z" fill="#e2e2e2" />
        <path d="M47,43L53,44L52,50L48,48Z" fill="#eee" />
        <path d="M31,77L36,76L43,78L49,81L46,86L42,90L36,87L33,81Z" fill="#f2f2f2" />
        <path d="M54,62L60,58L68,60L67,68L60,71L55,67Z" fill="#bcbcbc" />
        <path d="M24,75Q28,88 42,90L30,90Z" fill="#222" opacity=".6" />
      </g>
      <path d="M24,79.5Q38,73 47,66.5L54,61L58,60.5L73,49L74,50.5L61,62.5L63,68L61,68L57,65L49,68.5Q38,75.5 24,79.5Z" fill="#0b0b0b" />
      <path d="M54,48L60,49L65,53L60,57L56,53ZM66,52L71,50L70,60L67,64L64,58Z" fill="#111" />
      <path d="M50,64.5L72,50" stroke="#ccc" strokeWidth=".7" />
      <text x="101" y="69.3" fill="#fff" fontFamily='"Open Sans", "Noto Sans", sans-serif' fontSize="28.5" textLength="123">ADSBHub</text>
      <text x="82.5" y="86" fill="#fff" stroke="#fff" strokeWidth=".55" fontFamily='"DejaVu Sans", sans-serif' fontSize="12.6" textLength="157">ADS-B Sharing System</text>
    </Logo>
  );
}

const navItems = ["Stations", "Coverage", "How to feed?", "How to get data?", "Articles", "Contact us"];

const columns = [
  ["N", 40], ["Icao", 133], ["Callsign", 139], ["Latitude", 138], ["Longitude", 152], ["Altitude\n[feet]", 124],
  ["Speed\n[knots]", 112], ["VSpeed\n[feet/min]", 150], ["Heading\n[grad]", 129], ["RcvMsg\n[count]", 129], ["Last seen\n[sec]", 148],
];
const rows = [
  [1, "4CAF9F", "BCS6015", "52.32690", "13.22958", 8175, 251, 1408, 252, 144, 4],
  [2, "3CCCAA", "DCEUS", "52.50435", "13.63503", 5375, 246, -1024, 70, 437, 1],
  [3, "3D526B", "DFDLR", "52.58806", "13.33167", 2175, 138, -128, 72, 79, 3],
  [4, "3D6275", "DFJNP", "51.98051", "12.59433", 19825, 174, -448, 259, 25, 583],
  [5, "3C64A7", "DLH8RJ", "51.75229", "12.10582", 27050, 430, 2240, 232, 143, 486],
  [6, "AE0136", "DUKE63", "52.08948", "13.59459", 31000, 414, 0, 64, 2, 399],
  [7, "3C70C8", "GEC8410", "52.41163", "13.16178", 35000, 505, 0, 55, 6, 397],
  [8, "451E8D", "LZB440", "52.45715", "13.86627", 4250, 211, -1408, 250, 5, 8],
  [9, "4BCDE3", "SXS3VR", "52.40092", "13.62556", 1150, 146, -704, 248, 20, 13],
];

function BrowserBar() {
  return (
    <Toolbar>
      <BackCircle>
        <ChromeIcon viewBox="0 0 16 16"><path d="M15,8H2M8,1.8L1.6,8L8,14.2" /></ChromeIcon>
      </BackCircle>
      <NavIcons>
        <ChromeIcon viewBox="0 0 16 16" $color="#b4b4b6"><path d="M1,8H14M8.5,2L14.6,8L8.5,14" /></ChromeIcon>
        <ChromeIcon viewBox="0 0 16 16"><path d="M13.2,10.2A6,6 0 1 1 12.2,4" /><path d="M14.8,1.6V7H9.4Z" fill="#4a4a4f" strokeWidth=".8" /></ChromeIcon>
        <ChromeIcon viewBox="0 0 16 16"><path d="M1,8.5L8,1.5L15,8.5M3,8V14.5H13V8" /><path d="M7,14V9.5H9.2V14" strokeWidth="1.6" /></ChromeIcon>
      </NavIcons>
      <UrlBar>
        <ChromeIcon viewBox="0 0 16 16" $color="#5b5b60" $w={1.6}>
          <path d="M8,1.6Q11,2.6 13.2,2.6Q13.6,11.5 8,14.4Q2.4,11.5 2.8,2.6Q5,2.6 8,1.6Z" /><path d="M8,4.6V11Q5.8,9.5 5.8,5.2Z" fill="#5b5b60" strokeWidth=".5" />
        </ChromeIcon>
        <UrlDivider />
        <ChromeIcon viewBox="0 0 16 16" $color="#5b5b60">
          <rect x="3" y="8" width="10" height="5.6" fill="#5b5b60" /><path d="M4.8,8V5A3.2,3.2 0 0 1 11.2,5V8" />
        </ChromeIcon>
        <Url>https://www.<b>adsbhub.org</b>/statistic.php</Url>
        <UrlActions>
          <ChromeIcon viewBox="0 0 16 16" $color="#5b5b60" $w={1.8}><rect x="2" y="1" width="12" height="14" rx="1.5" /><path d="M5,4.5H11M5,7H11M5,9.3H11M5,11.6H8.5" strokeWidth="1.1" /></ChromeIcon>
          <Gap $w={1} />
          <ChromeIcon viewBox="0 0 16 16" $color="#5b5b60" $w={1}><g fill="#5b5b60"><circle cx="2" cy="8" r="1.5" /><circle cx="8" cy="8" r="1.5" /><circle cx="14" cy="8" r="1.5" /></g></ChromeIcon>
          <ChromeIcon viewBox="0 0 16 16" $color="#5b5b60"><path d="M1.2,2H14.8V7.5A6.8,6.4 0 0 1 1.2,7.5ZM4.6,6L8,9.2L11.4,6" /></ChromeIcon>
          <ChromeIcon viewBox="0 0 16 16" $color="#5b5b60" $w={1.8}><path d="M8,1L10.1,5.6L15.1,6.1L11.3,9.5L12.4,14.6L8,12L3.6,14.6L4.7,9.5L.9,6.1L5.9,5.6Z" /></ChromeIcon>
        </UrlActions>
      </UrlBar>
      <RightIcons>
        <ChromeIcon viewBox="0 0 16 16" $color="#0a84ff"><path d="M8,1V11M3,6.5L8,11.4L13,6.5M2.5,15H13.5" /></ChromeIcon>
        <ChromeIcon viewBox="0 0 16 16" $w={1.9}><path d="M1.5,2V14M5,2V14M8.5,2V14M11,2.5L15,14" strokeLinecap="butt" /></ChromeIcon>
        <ChromeIcon viewBox="0 0 16 16" $w={1.9}><rect x="1" y="2" width="14" height="12" rx="1.6" /><path d="M8,2V14" strokeWidth="1.5" /><path d="M3.6,5H5.8M3.6,7.3H5.8M3.6,9.6H5.8" strokeWidth="1" /></ChromeIcon>
        <ChromeIcon viewBox="0 0 16 16" $w={1.2}><circle cx="8" cy="8" r="6.7" /><g fill="#4a4a4f" stroke="none"><circle cx="8" cy="6" r="2.8" /><path d="M3.4,11Q8,8.4 12.6,11Q8,15.8 3.4,11Z" /></g></ChromeIcon>
      </RightIcons>
      <MenuCell>
        <ChromeIcon viewBox="0 0 16 16"><path d="M3,3H13M3,8H13M3,13H13" /></ChromeIcon>
      </MenuCell>
    </Toolbar>
  );
}

export default function App() {
  return (
    <Page>
      <GlobalStyle />
      <BrowserBar />
      <Header>
        <LogoArt />
        <Nav>
          {navItems.map((item) => <NavLink key={item}>{item}</NavLink>)}
        </Nav>
        <ButtonGroup>
          <Button $w={82} $pad={5} $gap={1}>
            <ButtonIcon viewBox="0 0 13 12"><path d="M.5,9.5h1.8v2.5h-1.8zM3.2,7.8h1.8v4.2h-1.8zM5.8,5.6h1.8v6.4h-1.8zM8.4,3h1.8v9h-1.8zM10.9,0h1.6v12h-1.6z" fill="#333" /></ButtonIcon>
            Statistics
          </Button>
          <Button $w={78} $gap={2}>
            <ButtonIcon viewBox="0 0 13 12">
              <circle cx="6" cy="6" r="3.1" fill="none" stroke="#333" strokeWidth="2.6" />
              <path d="M6,0V2.4M6,9.6V12M0,6H2.4M9.6,6H12M1.8,1.8L3.4,3.4M8.6,8.6L10.2,10.2M10.2,1.8L8.6,3.4M3.4,8.6L1.8,10.2" stroke="#333" strokeWidth="2.2" />
            </ButtonIcon>
            Settings
          </Button>
          <Button $w={72} $pad={7} $gap={2}>
            <ButtonIcon viewBox="0 0 13 12">
              <path d="M7,1.5H3.2Q1,1.5 1,3.8V8.2Q1,10.5 3.2,10.5H7" fill="none" stroke="#333" strokeWidth="1.9" />
              <path d="M4.6,4.7H8V2.2L12.6,6L8,9.8V7.3H4.6Z" fill="#333" />
            </ButtonIcon>
            Logout
          </Button>
        </ButtonGroup>
      </Header>
      <Content>
        <TitleBar>Jan Berlin</TitleBar>
        <MapFrame>
          <MapView />
          <ZoomControl>
            <ZoomButton $top>+</ZoomButton>
            <ZoomButton>−</ZoomButton>
          </ZoomControl>
          <ZoomTrack><ZoomThumb /></ZoomTrack>
        </MapFrame>
        <Panel>
          <Table>
            <colgroup>
              {columns.map(([name, w]) => <col key={name} width={w} />)}
            </colgroup>
            <thead>
              <tr>{columns.map(([name]) => <Th key={name}>{name}</Th>)}</tr>
            </thead>
            <tbody>
              {rows.map((row, r) => (
                <Tr key={row[0]} $first={r === 0} $odd={r % 2 === 0}>
                  {row.map((cell, i) => <Td key={i} $first={r === 0}>{cell}</Td>)}
                </Tr>
              ))}
            </tbody>
          </Table>
        </Panel>
      </Content>
      <Footer>
        <Copyright>© 2017</Copyright>
        <span>Terms</span>
        <span>Disclaimer</span>
        <span>Privacy</span>
      </Footer>
    </Page>
  );
}
